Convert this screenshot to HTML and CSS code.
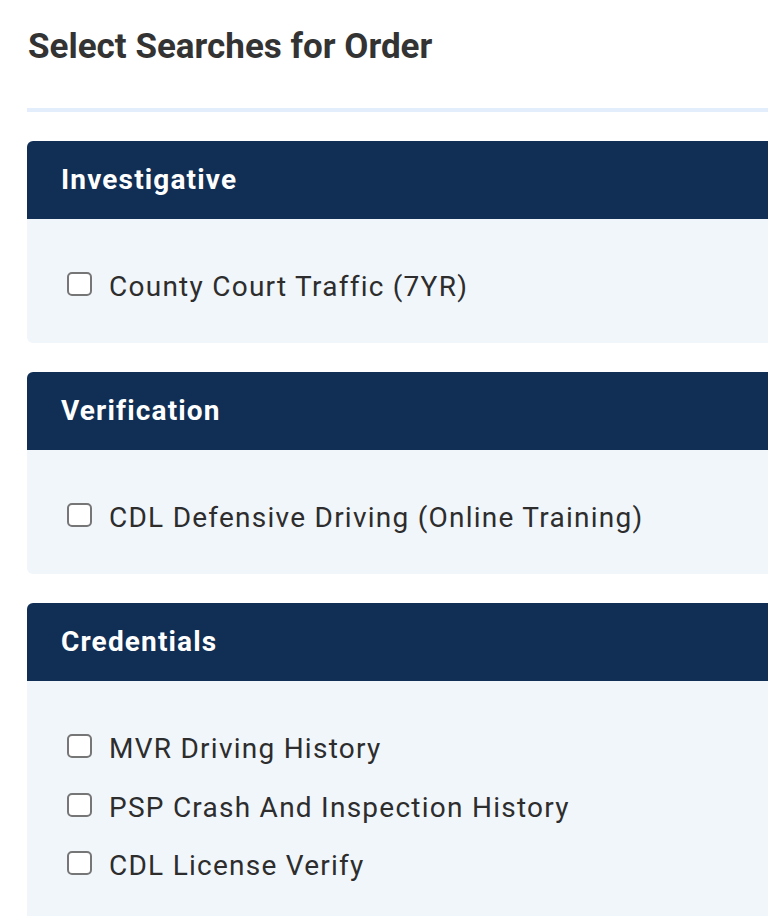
FILE: index.html
```html
<!DOCTYPE html>
<html lang="en">
<head>
<meta charset="utf-8">
<title>Select Searches for Order</title>
<link rel="stylesheet" href="styles.css">
</head>
<body>
<div class="page">
  <h1 class="title">Select Searches for Order</h1>
  <div class="divider"></div>

  <section class="panel">
    <div class="panel-head">Investigative</div>
    <div class="panel-body">
      <label class="item"><span class="box"></span><span class="label">County Court Traffic (7YR)</span></label>
    </div>
  </section>

  <section class="panel">
    <div class="panel-head">Verification</div>
    <div class="panel-body">
      <label class="item"><span class="box"></span><span class="label">CDL Defensive Driving (Online Training)</span></label>
    </div>
  </section>

  <section class="panel">
    <div class="panel-head">Credentials</div>
    <div class="panel-body">
      <label class="item"><span class="box"></span><span class="label">MVR Driving History</span></label>
      <label class="item"><span class="box"></span><span class="label">PSP Crash And Inspection History</span></label>
      <label class="item"><span class="box"></span><span class="label">CDL License Verify</span></label>
    </div>
  </section>
</div>
</body>
</html>
```
FILE: styles.css
```css
html, body {
  margin: 0;
  padding: 0;
  background: #ffffff;
  overflow: hidden;
}

body {
  font-family: Roboto, "Liberation Sans", Arial, sans-serif;
  color: #333333;
}

.page {
  padding: 26px 0 0 27px;
  overflow: hidden;
}

.title {
  margin: 0 0 40px 1px;
  font-size: 35px;
  line-height: 42px;
  font-weight: 700;
  color: #333333;
}

.divider {
  height: 4px;
  background: #e2eefc;
  margin-right: -20px;
  margin-bottom: 29px;
}

.panel {
  margin-right: -20px;
  margin-bottom: 29px;
  border-radius: 6px;
  overflow: hidden;
}

.panel-head {
  box-sizing: border-box;
  background: #112e55;
  color: #ffffff;
  height: 78px;
  display: flex;
  align-items: center;
  padding: 0 0 2px 34px;
  font-size: 28px;
  font-weight: 700;
  letter-spacing: 1.15px;
}

.panel-body {
  background: #f1f6fb;
  padding: 39px 0 26.5px 40px;
  display: flex;
  flex-direction: column;
}

.item {
  display: flex;
  align-items: flex-start;
  height: 58.5px;
  font-size: 28px;
  line-height: 58px;
  letter-spacing: 1.25px;
  color: #2d2d2d;
}

.box {
  box-sizing: border-box;
  width: 25px;
  height: 24px;
  margin-top: 14px;
  margin-right: 17px;
  border: 2px solid #767676;
  border-radius: 5px;
  background: #ffffff;
  flex: none;
}
```
